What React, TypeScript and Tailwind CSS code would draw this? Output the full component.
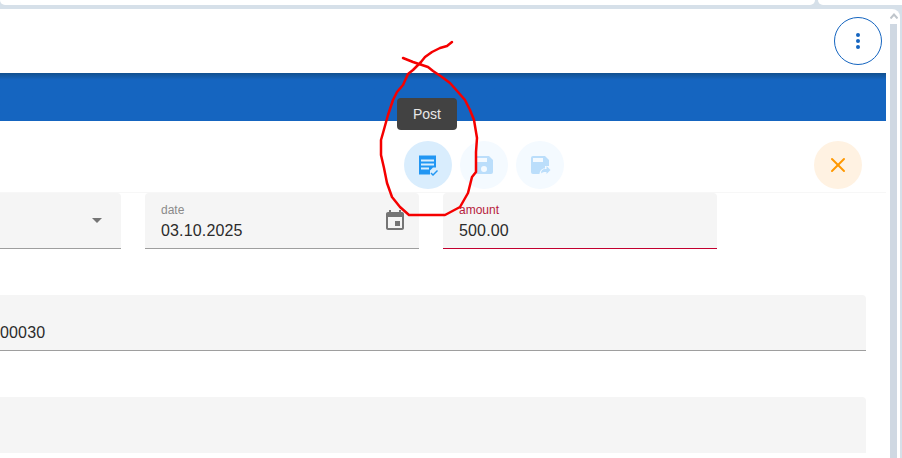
import { X } from "lucide-react";

const fieldFont = "font-['Liberation_Sans',Arial,sans-serif]";

function PostIcon() {
  return (
    <svg width="24" height="24" viewBox="0 0 24 24" fill="#2196f3">
      <path d="M3 3l1-1 1 1 1-1 1 1 1-1 1 1 1-1 1 1 1-1 1 1 1-1 1 1 1-1 1 1 1-1 1 1 1-1v12.500h-3l-3 3V21l-1 1-1-1-1 1-1-1-1 1-1-1-1 1-1-1-1 1-1-1-1 1z" />
      <path d="M5 6.500h13v2H5zM5 10.500h13v2H5zM5 14.500h8v2H5z" fill="#d9edfd" />
      <path d="M15.500 19.500l1.500 1.500 4-4 1 1-5 5-2.500-2.500z" />
    </svg>
  );
}

function SaveIcon() {
  return (
    <svg width="24" height="24" viewBox="0 0 24 24" fill="#bbdefb">
      <path d="M17 3H5a2 2 0 0 0-2 2v14a2 2 0 0 0 2 2h14a2 2 0 0 0 2-2V7l-4-4zm-5 16a3 3 0 1 1 0-6 3 3 0 0 1 0 6zm3-10H5V5h10v4z" />
    </svg>
  );
}

function SaveNextIcon() {
  return (
    <svg width="24" height="24" viewBox="0 0 24 24" fill="#bbdefb">
      <path d="M17 3H5a2 2 0 0 0-2 2v14a2 2 0 0 0 2 2h6.500c.2-3 2-5.500 5-5.500h.5V13h4V7l-4-4zm-2 6H5V5h10v4z" />
      <path d="M13 20.500c0-2.800 1.500-4.500 4-4.500h1.500v-3l4 4-4 4v-2H17c-1.500 0-3 .500-4 1.500z" />
    </svg>
  );
}

function Field({ label, value, className, invalid, children }: { label?: string; value?: string; className: string; invalid?: boolean; children?: React.ReactNode }) {
  return (
    <div className={`relative h-14 bg-[#f5f5f5] border-b ${invalid ? "border-[#c2002f]" : "border-[#9e9e9e]"} ${className}`}>
      {label && <div className={`pt-[10px] pl-4 text-xs leading-[14px] ${invalid ? "text-[#b71c3c]" : "text-[#8a8a8a]"}`}>{label}</div>}
      {value && <div className="pl-4 pt-[4px] text-base leading-[20px] tracking-[0.01em] text-[#2b2b2b]">{value}</div>}
      {children}
    </div>
  );
}

export default function App() {
  return (
    <div className={`relative flex h-[458px] w-[902px] flex-col overflow-hidden bg-[#d6e0e9] ${fieldFont}`}>
      <div className="flex h-[9px] justify-between">
        <div className="h-[5px] w-[815px] rounded-b-lg bg-white" />
        <div className="h-[5px] w-[84px] rounded-bl-lg bg-white" />
      </div>
      <div className="mr-[2px] flex min-h-0 flex-1 rounded-tr-lg bg-white">
        <main className="w-[886px]">
          <header className="flex h-[64px] items-start justify-end pt-[8px] pr-[4px]">
            <button className="flex size-12 items-center justify-center rounded-full border border-[#1565c0]">
              <span className="flex flex-col gap-[2px]">
                <i className="size-1 rounded-full bg-[#1565c0]" />
                <i className="size-1 rounded-full bg-[#1565c0]" />
                <i className="size-1 rounded-full bg-[#1565c0]" />
              </span>
            </button>
          </header>
          <div className="h-12 bg-gradient-to-b from-[#12508f] from-0% via-[#1565c0] via-[14%] to-[#1565c0]" />
          <div className="flex h-[72px] items-start border-b border-[#f7f7f7] pt-[20px]">
            <div className="ml-[404px] flex gap-2">
              <button className="flex size-12 items-center justify-center rounded-full bg-[#d9edfd]"><PostIcon /></button>
              <button className="flex size-12 items-center justify-center rounded-full bg-[#f4faff]"><SaveIcon /></button>
              <button className="flex size-12 items-center justify-center rounded-full bg-[#f4faff]"><SaveNextIcon /></button>
            </div>
            <button className="ml-[250px] flex size-12 items-center justify-center rounded-full bg-[#fff2e2]">
              <X size={24} strokeWidth={2} color="#ff9800" />
            </button>
          </div>
          <div className="flex gap-6">
            <Field className="w-[121px] rounded-tr">
              <div className="absolute top-[25px] right-[19px] h-0 w-0 border-x-[5px] border-t-[5px] border-x-transparent border-t-[#757575]" />
            </Field>
            <Field className="w-[274px] rounded-t" label="date" value="03.10.2025">
              <svg className="absolute top-[16px] right-[12px]" width="24" height="24" viewBox="0 0 24 24" fill="#757575">
                <path d="M17 12h-5v5h5v-5zM16 1v2H8V1H6v2H5c-1.110 0-1.990.900-1.990 2L3 19c0 1.100.890 2 2 2h14c1.100 0 2-.900 2-2V5c0-1.100-.900-2-2-2h-1V1h-2zm3 18H5V8h14v11z" />
              </svg>
            </Field>
            <Field className="w-[274px] rounded-t" label="amount" value="500.00" invalid />
          </div>
          <div className="mt-[46px] w-[866px]">
            <div className="h-14 rounded-tr border-b border-[#9e9e9e] bg-[#f5f5f5] pt-[28px] text-base leading-[20px] tracking-[0.01em] text-[#2b2b2b]">00030</div>
          </div>
          <div className="mt-[46px] h-14 w-[866px] rounded-tr bg-[#f5f5f5]" />
        </main>
        <div className="ml-[4px] flex w-[7px] flex-col items-center pt-[4px]">
          <svg className="mb-[5px] shrink-0" width="8" height="6" viewBox="0 0 8 6" fill="none" stroke="#bfc5cb" strokeWidth="2">
            <path d="M0.500 5.500L4 1.500l3.500 4" />
          </svg>
          <div className="h-full w-[7px] bg-[#cfd8e2]" />
        </div>
      </div>
      <div className="absolute top-[98px] left-[397px] flex h-8 w-[60px] items-center justify-center rounded bg-[#424242] text-sm text-[#e8e8e8]">Post</div>
      <svg className="pointer-events-none absolute top-0 left-0" width="902" height="458" fill="none" stroke="#f50000" strokeWidth="2.500" strokeLinejoin="round" strokeLinecap="round">
        <path d="M452 42L447 46 440 48 432 52 425 57 421 62 419 64 413 70 408 74 403 85 397 92 393 100 388 115 383 133 381 140 381 155 384 168 387 183 392 197 400 207 409 215 445 215 460 207 468 193 472 177 476 172 476 152 477 138 476 132 474 120 470 110 465 100 458 92 450 83 442 77 433 71 428 67 419 64 413 62 408 60 403 58" />
      </svg>
    </div>
  );
}
